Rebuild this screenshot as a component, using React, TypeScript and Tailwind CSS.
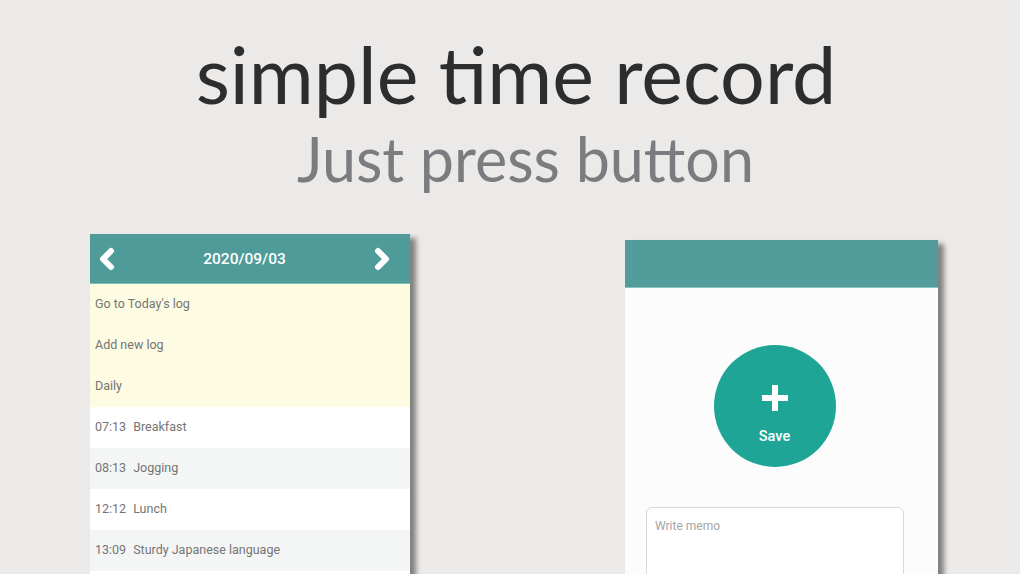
import { ChevronLeft, ChevronRight } from "lucide-react";

const menuRows = ["Go to Today's log", "Add new log", "Daily"];

const logRows = [
  { time: "07:13", label: "Breakfast" },
  { time: "08:13", label: "Jogging" },
  { time: "12:12", label: "Lunch" },
  { time: "13:09", label: "Sturdy Japanese language" },
];

const LogPanel = () => (
  <div className="w-[320px] shrink-0 bg-white shadow-[6px_4px_5px_rgba(0,0,0,0.45)]">
    <div className="h-[50px] bg-[#4e9b99] flex items-center justify-between pl-[1px] pr-[12px] border-b border-[#7fc0b6]">
      <ChevronLeft size={32} strokeWidth={4.5} className="text-white" />
      <span className="text-[15.5px] font-medium text-white pt-[2px]">2020/09/03</span>
      <ChevronRight size={32} strokeWidth={4.5} className="text-white" />
    </div>
    <div className="bg-[#fdfbe1]">
      {menuRows.map((row) => (
        <div key={row} className="h-[41px] flex items-center px-[5px] text-[12.5px] text-[#757575]">
          {row}
        </div>
      ))}
    </div>
    {logRows.map((row, i) => (
      <div
        key={row.time}
        className={`h-[41px] flex items-center gap-[7px] px-[5px] text-[12.5px] text-[#757575] ${
          i % 2 === 1 ? "bg-[#f4f6f5]" : "bg-white"
        }`}
      >
        <span>{row.time}</span>
        <span>{row.label}</span>
      </div>
    ))}
    <div className="h-[20px] bg-white" />
  </div>
);

const SavePanel = () => (
  <div className="w-[313px] shrink-0 mt-[6px] bg-[#fcfcfc] shadow-[6px_4px_5px_rgba(0,0,0,0.45)] h-[360px]">
    <div className="h-[48px] bg-[#529c9c] border-b border-[#86c4bc]" />
    <div className="flex flex-col items-center pt-[57px] pr-[14px]">
      <button className="w-[122px] h-[122px] rounded-full bg-[#1ea595] flex flex-col items-center justify-center pt-[21px] text-white">
        <svg width="26" height="26" viewBox="0 0 26 26">
          <rect x="10" y="0" width="6" height="26" fill="white" />
          <rect x="0" y="10" width="26" height="6" fill="white" />
        </svg>
        <span className="text-[14.5px] font-medium mt-[15px]">Save</span>
      </button>
    </div>
    <div className="ml-[21px] mr-[34px] mt-[40px] h-[90px] rounded-[6px] border border-[#d8d8d8] bg-white px-[8px] pt-[9px] text-[12px] text-[#a5a5a5]">
      Write memo
    </div>
  </div>
);

export default function App() {
  return (
    <div
      className="w-[1020px] h-[574px] overflow-hidden bg-[#ebeae8] flex flex-col"
      style={{ fontFamily: "Roboto, 'Liberation Sans', sans-serif" }}
    >
      <div className="flex flex-col items-center pt-[29px]" style={{ fontFamily: "Lato, 'Open Sans', sans-serif" }}>
        <h1 className="text-[79px] leading-[90px] text-[#2d2d2f] whitespace-nowrap pl-[12px]">simple time record</h1>
        <h2 className="text-[61px] leading-[72px] text-[#7c7c80] mt-[4px] whitespace-nowrap pl-[31px]">Just press button</h2>
      </div>
      <div className="flex items-start pl-[90px] mt-[39px] gap-[215px]">
        <LogPanel />
        <SavePanel />
      </div>
    </div>
  );
}
